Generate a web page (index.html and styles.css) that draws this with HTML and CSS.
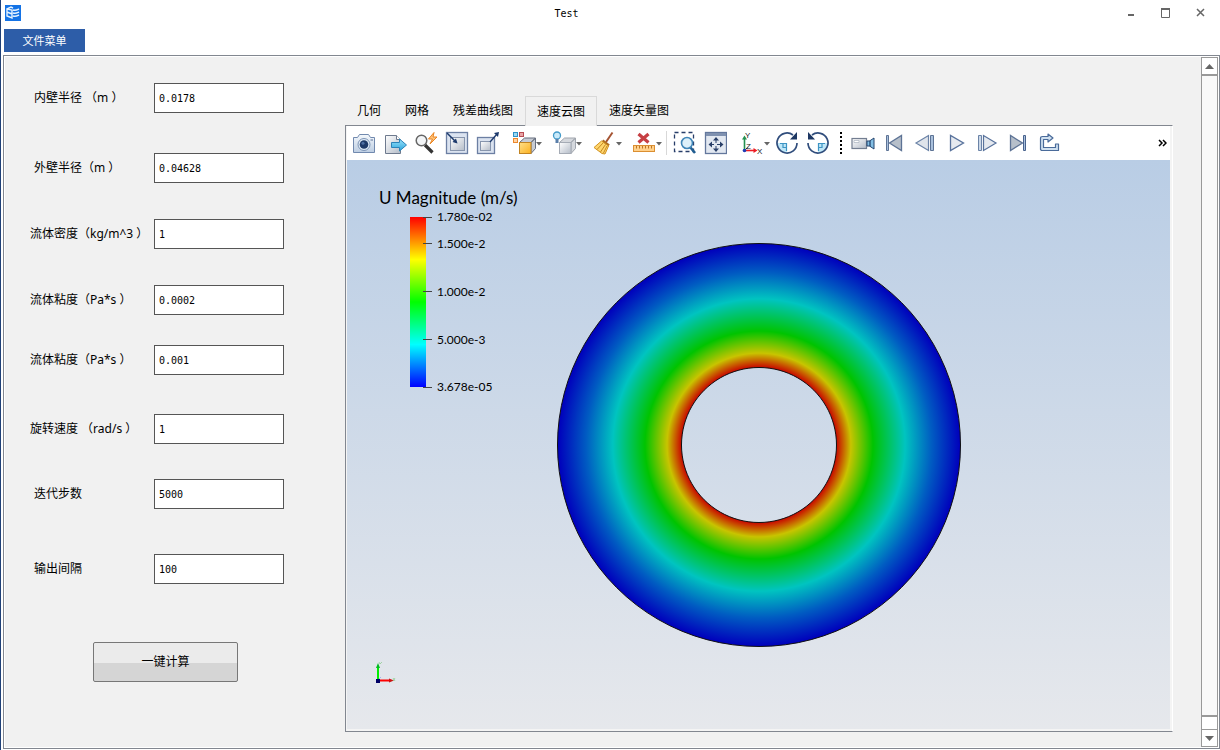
FILE: index.html
```html
<!DOCTYPE html>
<html lang="zh-CN">
<head>
<meta charset="utf-8">
<title>Test</title>
<link rel="stylesheet" href="styles.css">
</head>
<body>
<svg class="defs" aria-hidden="true">
  <defs>
    <linearGradient id="steel" x1="0" y1="0" x2="1" y2="1"><stop offset="0" stop-color="#fff"/><stop offset="1" stop-color="#b4bcc8"/></linearGradient>
    <linearGradient id="pale" x1="0" y1="0" x2="0" y2="1"><stop offset="0" stop-color="#f4f8fc"/><stop offset="1" stop-color="#bccde2"/></linearGradient>
    <linearGradient id="sky" x1="0" y1="0" x2="0" y2="1"><stop offset="0" stop-color="#9be2fb"/><stop offset="1" stop-color="#2aa5dc"/></linearGradient>
    <linearGradient id="gold" x1="0" y1="0" x2="1" y2="1"><stop offset="0" stop-color="#ffe08a"/><stop offset="1" stop-color="#fbb01e"/></linearGradient>
    <linearGradient id="rainbow" x1="0" y1="0" x2="0" y2="1"><stop offset="0" stop-color="#f00"/><stop offset=".25" stop-color="#ff0"/><stop offset=".5" stop-color="#0f0"/><stop offset=".75" stop-color="#0ff"/><stop offset="1" stop-color="#00f"/></linearGradient>
    <radialGradient id="field" gradientUnits="userSpaceOnUse" cx="202" cy="202" r="201">
      <stop offset=".383" stop-color="#c80000"/><stop offset=".457" stop-color="#c8c400"/><stop offset=".567" stop-color="#00c400"/><stop offset=".727" stop-color="#00c4c0"/><stop offset=".86" stop-color="#005cc2"/><stop offset="1" stop-color="#0000bc"/>
    </radialGradient>
  </defs>
</svg>

<div class="window">
  <header class="titlebar">
    <svg class="app-icon" width="16" height="16" viewBox="0 0 16 16"><rect width="16" height="16" fill="#1473e6"/><path d="M2 4l4-2 2 1M2 4v7l5 2V5zM8 5c3 1 4 0 6-1M8 8c3 1 4 0 6-1M8 11c3 1 4 0 6-1M2 7l5 2" fill="none" stroke="#e6f3ff" stroke-width="1.4"/></svg>
    <h1 class="title">Test</h1>
    <div class="window-controls">
      <button aria-label="最小化"><svg width="10" height="10" viewBox="0 0 10 10"><path d="M2 7h6" stroke="#666" stroke-width="2"/></svg></button>
      <button aria-label="最大化"><svg width="10" height="10" viewBox="0 0 10 10"><path d="M.5 1v8.500h8V1" fill="none" stroke="#666"/><path d="M0 1h9" stroke="#666" stroke-width="2"/></svg></button>
      <button aria-label="关闭"><svg width="10" height="10" viewBox="0 0 10 10"><path d="M1 1l7 7M8 1L1 8" stroke="#666" stroke-width="1.500"/></svg></button>
    </div>
  </header>
  <nav class="menubar"><button class="menu-button">文件菜单</button></nav>

  <main class="frame">
    <div class="content">
      <form class="params">
        <div class="fields">
          <label class="indent" for="f1">内壁半径 （m ）</label><input id="f1" type="text" value="0.0178">
          <label class="indent" for="f2">外壁半径（m ）</label><input id="f2" type="text" value="0.04628">
          <label for="f3">流体密度（kg/m^3 ）</label><input id="f3" type="text" value="1">
          <label for="f4">流体粘度（Pa*s ）</label><input id="f4" type="text" value="0.0002">
          <label for="f5">流体粘度（Pa*s ）</label><input id="f5" type="text" value="0.001">
          <label for="f6">旋转速度 （rad/s ）</label><input id="f6" type="text" value="1">
          <label class="indent" for="f7">迭代步数</label><input id="f7" type="text" value="5000">
          <label class="indent" for="f8">输出间隔</label><input id="f8" type="text" value="100">
        </div>
        <button class="compute" type="button">一键计算</button>
      </form>

      <section class="results">
        <div class="tabs" role="tablist">
          <button role="tab">几何</button>
          <button role="tab">网格</button>
          <button role="tab">残差曲线图</button>
          <button role="tab" class="active" aria-selected="true">速度云图</button>
          <button role="tab">速度矢量图</button>
        </div>
        <div class="pane">
          <div class="toolbar">
            <div class="group">
              <button aria-label="截图"><svg width="24" height="24" viewBox="0 0 24 24"><path d="M1.500 6.500h4l2-3h9l2 3h4v15h-21z" fill="url(#pale)" stroke="#7189ae" stroke-linejoin="round"/><circle cx="12" cy="13.500" r="6" fill="#dfeaf5" stroke="#7d94b6"/><circle cx="12" cy="13.500" r="4.300" fill="#1e3968"/><circle cx="11" cy="12.300" r="1.500" fill="#4e6fa2"/><path d="M18.500 9h2.500" stroke="#5d7396"/></svg></button>
              <button aria-label="导出"><svg width="24" height="24" viewBox="0 0 24 24"><path d="M2.500 4.500h11l4 4v14h-15z" fill="url(#steel)" stroke="#6e7a8e"/><path d="M13.500 4.500v4h4" fill="#fff" stroke="#6e7a8e"/><path d="M8.500 11.500h8v-3.500l7 6-7 6v-3.500h-8z" fill="url(#sky)" stroke="#2c83b8"/></svg></button>
              <button aria-label="快速缩放"><svg width="24" height="24" viewBox="0 0 24 24"><path d="M11 14l7.500 7.500" stroke="#333" stroke-width="3.200"/><circle cx="7.500" cy="9.500" r="5.300" fill="#f3f5f7" stroke="#666" stroke-width="1.500"/><path d="M20 1.500l-5.500 6.500h4l-2.500 5 7-7h-4z" fill="#ffc37a" stroke="#ea8421"/></svg></button>
              <button aria-label="缩小窗口"><svg width="24" height="24" viewBox="0 0 24 24"><rect x="1.500" y="1.500" width="21" height="21" fill="#dbe3f0" stroke="#6c7fa3" stroke-width="1.300"/><rect x="5.500" y="6.500" width="14" height="13" fill="url(#steel)" stroke="#8795ad"/><path d="M2 2l9 9" stroke="#1d3a6c" stroke-width="1.500"/><path d="M12.500 12.500l-5-1.500 3.500-3.500z" fill="#1d3a6c"/></svg></button>
              <button aria-label="放大窗口"><svg width="24" height="24" viewBox="0 0 24 24"><rect x="1.500" y="6.500" width="17" height="16" fill="#dbe3f0" stroke="#6c7fa3" stroke-width="1.300"/><rect x="4.500" y="10.500" width="10" height="9" fill="url(#steel)" stroke="#8795ad"/><path d="M14 11l7-8" stroke="#1d3a6c" stroke-width="1.300"/><path d="M23 1l-1 5-4-4z" fill="#1d3a6c"/></svg></button>
            </div>
            <div class="group drops">
              <button aria-label="着色"><svg width="33" height="24" viewBox="0 0 33 24"><rect x="1.500" y="1.500" width="4" height="4" fill="#9bd8f4" stroke="#2d91c7"/><rect x="7.500" y="1.500" width="4" height="4" fill="#e8a4a6" stroke="#b84b52"/><rect x="1.500" y="7.500" width="4" height="4" fill="#ffd3a3" stroke="#eb872c"/><path d="M7.500 11.500l5-4.500h11l-4.500 4.500zM19 11.500L23.500 7v10.500L19 22.500z" fill="#c6cbd3" stroke="#666e7e"/><rect x="7.500" y="11.500" width="11.500" height="11" fill="url(#gold)" stroke="#c18422"/><path d="M24 11h6l-3 3.500z" fill="#666"/></svg></button>
              <button aria-label="光照"><svg width="33" height="24" viewBox="0 0 33 24"><path d="M7.500 11.500l5-4.500h11l-4.500 4.500zM19 11.500L23.500 7v10.500L19 22.500z" fill="#d5d8dd" stroke="#a0a5ad"/><rect x="7.500" y="11.500" width="11.500" height="11" fill="url(#steel)" stroke="#a5abb5"/><circle cx="5" cy="4.500" r="3.500" fill="#c9eafa" stroke="#439ac9" stroke-width="1.300"/><path d="M3.500 8h3v4h-3z" fill="#5a7faa"/><path d="M24 11h6l-3 3.500z" fill="#666"/></svg></button>
              <button aria-label="清除"><svg width="33" height="24" viewBox="0 0 33 24"><path d="M20.500 1.500L14 11" stroke="#a55433" stroke-width="2"/><path d="M10.500 9.500l6.500 5" stroke="#b06e22" stroke-width="2.500"/><path d="M9.500 10L2 16.500l8 6 3 .5 3.500-8z" fill="#ffd66d" stroke="#d29321"/><path d="M11 12l-6 6.500M13.500 13.500L8.500 21M15 15l-3.500 7" stroke="#c68820" fill="none"/><path d="M24 11h6l-3 3.500z" fill="#666"/></svg></button>
              <button aria-label="删除标尺"><svg width="33" height="24" viewBox="0 0 33 24"><path d="M6.500 3l10 8.500M16.500 3l-10 8.500" stroke="#c63f43" stroke-width="3.200"/><rect x="1.500" y="14.500" width="21" height="6" fill="#ffd08a" stroke="#db8f32"/><path d="M4.500 15v2.500M7.500 15v2.500M10.500 15v2.500M13.500 15v2.500M16.500 15v2.500M19.500 15v2.500" stroke="#bd7625"/><path d="M24 11h6l-3 3.500z" fill="#666"/></svg></button>
            </div>
            <span class="separator"></span>
            <div class="group view">
              <button aria-label="框选缩放"><svg width="24" height="24" viewBox="0 0 24 24"><rect x="2.500" y="1.500" width="19" height="19" fill="none" stroke="#273d69" stroke-width="1.300" stroke-dasharray="4 3"/><path d="M18.500 16.500l4.500 5.500" stroke="#205d91" stroke-width="2.600"/><circle cx="15" cy="12" r="5.500" fill="#ddf0fa" stroke="#4086b8" stroke-width="1.600"/></svg></button>
              <button aria-label="适应窗口"><svg width="24" height="24" viewBox="0 0 24 24"><rect x="2.500" y="1.500" width="21" height="21" fill="#e2e8f1" stroke="#63779c" stroke-width="1.300"/><path d="M3 3.500h20" stroke="#7f91b0" stroke-width="3"/><path d="M13 6l3 3.500h-6zM13 21l3-3.500h-6zM5.500 13.500l3.500-3v6zM20.500 13.500l-3.500-3v6z" fill="#293f68"/><path d="M13 9v9M8 13.500h10" stroke="#293f68" stroke-dasharray="3 3"/></svg></button>
            </div>
            <div class="group axes">
              <button aria-label="视图方向"><svg width="33" height="24" viewBox="0 0 33 24"><path d="M5.500 19.500V8" stroke="#259050" stroke-width="1.600"/><path d="M5.500 4.500l2.500 4H3z" fill="#259050"/><path d="M5.500 19.500h10" stroke="#ed1c24" stroke-width="1.600"/><path d="M18.500 19.500l-4-2.500v5z" fill="#ed1c24"/><path d="M5.500 19.500l3-3" stroke="#2349a5"/><circle cx="5.500" cy="19.500" r="1.800" fill="#1e3cb4"/><g class="axis-text"><text x="6" y="7">Y</text><text x="7" y="18">Z</text><text x="18" y="23">X</text></g><path d="M25 11h6l-3 3.500z" fill="#666"/></svg></button>
            </div>
            <div class="group rotate">
              <button aria-label="顺时针旋转"><svg width="24" height="24" viewBox="0 0 24 24"><path d="M12 12v10A10 10 0 0 1 2 12z" fill="#bfe7f8"/><path d="M5 12.500h6.500V20M8 12.500v4h4" fill="none" stroke="#3d94c4" stroke-width="1.200"/><path d="M22 12A10 10 0 1 1 18 4" fill="none" stroke="#304d7c" stroke-width="1.700"/><path d="M22 1v7.500h-7z" fill="#1d3763"/></svg></button>
              <button aria-label="逆时针旋转"><svg width="24" height="24" viewBox="0 0 24 24"><path d="M12 12v10A10 10 0 0 0 22 12z" fill="#bfe7f8"/><path d="M19 12.500h-6.500V20M16 12.500v4h-4" fill="none" stroke="#3d94c4" stroke-width="1.200"/><path d="M2 12A10 10 0 1 0 6 4" fill="none" stroke="#304d7c" stroke-width="1.700"/><path d="M2 1v7.500h7z" fill="#1d3763"/></svg></button>
            </div>
            <span class="grip"></span>
            <div class="group player">
              <button aria-label="录像"><svg width="24" height="24" viewBox="0 0 24 24"><rect x="1" y="7.500" width="14.500" height="10" fill="url(#steel)" stroke="#737e91" stroke-width="1.200"/><path d="M3 9.500h5v2H3z" fill="#fff" stroke="#a0a9b7" stroke-width=".6"/><path d="M16 10h2.500l4.500-3v11l-4.500-3H16z" fill="#83bfe4" stroke="#24456f"/><path d="M19 9.500v6" stroke="#24456f" stroke-width="1.300"/></svg></button>
              <button aria-label="第一帧"><svg width="24" height="24" viewBox="0 0 24 24"><path d="M19.500 4.500v15L7.500 12z" fill="#b6bfca" stroke="#5d7395" stroke-width="1.300"/><path d="M4.500 4.500h2v15h-2z" fill="#a9c0dc" stroke="#5d7395"/></svg></button>
              <button aria-label="上一帧"><svg width="24" height="24" viewBox="0 0 24 24"><path d="M15.500 4.500v15L3 12z" fill="#dfe4eb" stroke="#6b83a7" stroke-width="1.200"/><path d="M17.500 4.500h3v15h-3z" fill="#a9c0dc" stroke="#5d7395"/></svg></button>
              <button aria-label="播放"><svg width="24" height="24" viewBox="0 0 24 24"><path d="M6.500 4.500v15L19.500 12z" fill="#e5e9ef" stroke="#58729c" stroke-width="1.300"/></svg></button>
              <button aria-label="下一帧"><svg width="24" height="24" viewBox="0 0 24 24"><path d="M8.500 4.500v15L21 12z" fill="#e5e9ef" stroke="#58729c" stroke-width="1.200"/><path d="M3.500 4.500h3v15h-3z" fill="#cbd8e8" stroke="#6b83a7"/></svg></button>
              <button aria-label="最后一帧"><svg width="24" height="24" viewBox="0 0 24 24"><path d="M4.500 4.500v15L16.500 12z" fill="#b6bfca" stroke="#5d7395" stroke-width="1.300"/><path d="M17.500 4.500h2v15h-2z" fill="#a9c0dc" stroke="#48628d"/></svg></button>
              <button aria-label="循环"><svg width="24" height="24" viewBox="0 0 24 24"><path d="M3.500 18.500V7.500q0-2 2-2H11V3l5 4-5 4V8.500H6.500v8h12V13h3v6.500h-17z" fill="#cfe0f0" stroke="#4a6b9a" stroke-width="1.200" stroke-linejoin="round"/></svg></button>
            </div>
            <button class="more" aria-label="更多"><svg width="9" height="8" viewBox="0 0 9 8"><path d="M1 1l3 3-3 3M5 1l3 3-3 3" fill="none" stroke="#000" stroke-width="1.500"/></svg></button>
          </div>

          <div class="viewport">
            <svg class="legend" width="150" height="210" viewBox="0 0 150 210">
              <text class="legend-title" x="0" y="16">U Magnitude (m/s)</text>
              <rect x="31" y="29" width="16" height="170" fill="url(#rainbow)"/>
              <path d="M44 29.500h9M44 55.500h9M44 103.500h9M44 151.500h9M44 199.500h9" stroke="#444"/>
              <g class="legend-values">
                <text x="58" y="33">1.780e-02</text>
                <text x="58" y="60">1.500e-2</text>
                <text x="58" y="108">1.000e-2</text>
                <text x="58" y="156">5.000e-3</text>
                <text x="58" y="203">3.678e-05</text>
              </g>
            </svg>
            <svg class="disc" width="404" height="404" viewBox="0 0 404 404">
              <path fill-rule="evenodd" d="M202 .5a201.500 201.500 0 1 0 .01 0zM202 124.500a77.500 77.500 0 1 1-.01 0z" fill="url(#field)" stroke="#111"/>
            </svg>
            <svg class="triad" width="24" height="24" viewBox="0 0 24 24"><path d="M4 20V6" stroke="#0e0" stroke-width="2"/><path d="M4 3l2 5H2z" fill="#0b2"/><path d="M4 20.500h12" stroke="#f00" stroke-width="2"/><path d="M20 20.500l-5-2v4z" fill="#c11"/><path d="M4 20l3-3" stroke="#a9b3ee"/><rect x="2" y="19" width="4" height="4" fill="#006"/><path d="M5 2l1 2 2-2M19 18l2 3M21 18l-2 3" stroke="#8c8" stroke-width=".7" fill="none"/></svg>
          </div>
        </div>
      </section>
    </div>

    <div class="scrollbar">
      <button aria-label="向上滚动"><svg width="9" height="5" viewBox="0 0 9 5"><path d="M0 5L4.500 0 9 5z" fill="#666"/></svg></button>
      <div class="thumb"></div>
      <div class="track"></div>
      <button aria-label="向下滚动"><svg width="9" height="5" viewBox="0 0 9 5"><path d="M0 0l4.500 5L9 0z" fill="#666"/></svg></button>
    </div>
  </main>
</div>
</body>
</html>
```
FILE: styles.css
```css
* { box-sizing: border-box; }

body {
  margin: 0;
  background: #fff;
  color: #000;
  font: 12px/16px "Noto Sans", "Noto Sans CJK SC", sans-serif;
}

button {
  padding: 0;
  border: 0;
  background: none;
  color: inherit;
  font: inherit;
}

svg { display: block; }

.defs {
  position: absolute;
  width: 0;
  height: 0;
}

.window {
  display: flex;
  flex-direction: column;
  min-height: 100vh;
  padding: 0 0 1px 2px;
  border-left: 1px solid #1f4077;
}

/* Title bar and menu */
.titlebar {
  display: grid;
  grid-template-columns: 1fr auto 1fr;
  align-items: center;
  height: 29px;
  padding: 0 14px 4px 2px;
}

.title {
  margin: 0;
  padding: 3px 78px 0 0;
  font: 10px/14px "DejaVu Sans Mono", monospace;
}

.window-controls {
  display: flex;
  justify-content: flex-end;
  gap: 25px;
}

.menubar {
  padding: 0 1px;
  height: 26px;
}

.menu-button {
  width: 81px;
  height: 23px;
  background: #2d5da8;
  color: #fff;
  font-size: 11px;
}

/* Main frame */
.frame {
  display: flex;
  flex: 1;
  padding: 1px;
  border: 1px solid #828790;
  background: #fff;
}

.content {
  display: flex;
  flex: 1;
  background: #f1f1f1;
}

.params {
  width: 340px;
  padding: 26px 0 0 25px;
}

.fields {
  display: grid;
  grid-template-columns: 124px 130px;
  grid-template-rows: 70px 66px 66px 60px 69px 65px 75px 88px;
  align-items: start;
}

.fields label {
  line-height: 30px;
  white-space: nowrap;
}

.fields .indent { padding-left: 4px; }

.fields input {
  width: 100%;
  height: 30px;
  padding: 0 4px;
  border: 1px solid #555;
  background: #fff;
  color: #000;
  font: 10px/16px "DejaVu Sans Mono", monospace;
}

.compute {
  width: 145px;
  height: 40px;
  margin-left: 63px;
  border: 1px solid #777;
  border-radius: 2px;
  background: linear-gradient(#ebebeb 52%, #d5d5d5 52%);
}

/* Result tabs */
.results {
  display: flex;
  flex: 1;
  flex-direction: column;
  padding: 39px 28px 15px 0;
}

.tabs {
  display: flex;
  height: 29px;
}

.tabs button {
  padding: 0 12px;
}

.tabs .active {
  z-index: 1;
  height: 30px;
  padding: 0 11px;
  border: 1px solid #d9d9d9;
  border-bottom: 0;
  background: #f1f1f1;
}

.pane {
  display: flex;
  flex: 1;
  flex-direction: column;
  padding: 0 2px 2px 1px;
  border: 1px solid #828790;
  border-right-color: #fff;
  background: #f4f4f4;
}

.toolbar {
  display: flex;
  align-items: center;
  height: 34px;
  padding: 0 3px 0 5px;
  background: #fff;
}

.group {
  display: flex;
  gap: 7px;
}

.drops { margin-left: 12px; }
.view { margin-left: 5px; }
.axes { margin-left: 12px; }
.rotate { margin-left: 3px; }
.player { margin-left: 9px; }

.separator {
  width: 1px;
  height: 24px;
  margin-left: 1px;
  background: #d8d8d8;
}

.grip {
  height: 22px;
  margin-left: 10px;
  border-left: 2px dotted #000;
}

.more { margin-left: auto; }

.axis-text {
  fill: #222;
  font: 8px "Liberation Sans", sans-serif;
}

/* Render view */
.viewport {
  position: relative;
  display: flex;
  flex: 1;
  align-items: center;
  justify-content: center;
  background: linear-gradient(#b9cde5, #e6e8ec);
}

.legend {
  position: absolute;
  top: 28px;
  left: 32px;
}

.legend-title { font: 17px Lato, sans-serif; }
.legend-values { font: 12px Lato, sans-serif; }

.triad {
  position: absolute;
  bottom: 45px;
  left: 27px;
}

/* Scroll bar */
.scrollbar {
  display: flex;
  flex-direction: column;
  width: 17px;
  border: 1px solid #999;
}

.scrollbar button {
  display: grid;
  place-items: center;
  height: 16px;
}

.thumb {
  flex: 1;
  border: solid #999;
  border-width: 2px 0;
  background: #f9f9f9;
}

.track {
  height: 13px;
  border-bottom: 1px solid #999;
}
```
